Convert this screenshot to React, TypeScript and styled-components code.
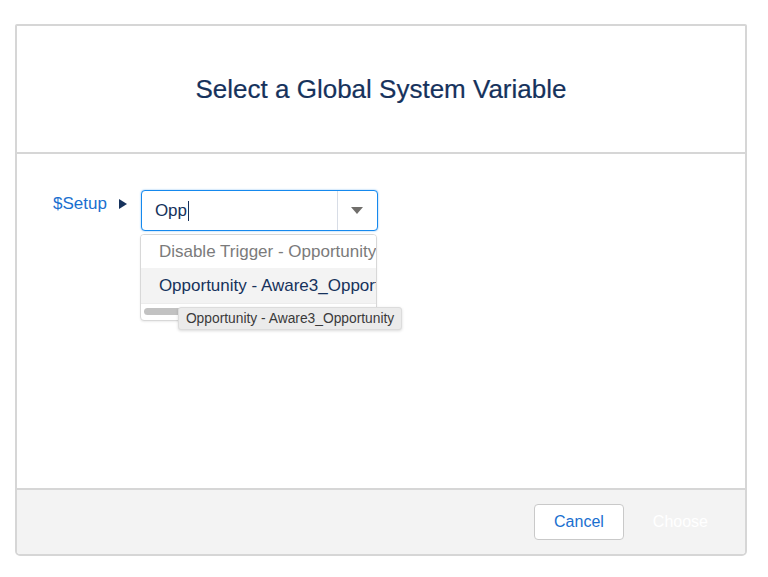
import React from "react";
import styled, { createGlobalStyle } from "styled-components";

const Global = createGlobalStyle`
  html, body { margin: 0; padding: 0; background: #ffffff; }
  body { font-family: "Liberation Sans", Arial, sans-serif; }
`;

const Page = styled.div`
  padding: 24px 0 0 15px;
`;

const Modal = styled.div`
  box-sizing: border-box;
  width: 732px;
  height: 532px;
  border: 2px solid #d6d6d6;
  border-radius: 2px 2px 5px 5px;
  display: flex;
  flex-direction: column;
  overflow: hidden;
  background: #fff;
`;

const Header = styled.div`
  height: 126px;
  border-bottom: 2px solid #d6d6d6;
  display: flex;
  align-items: center;
  justify-content: center;
`;

const Title = styled.h2`
  margin: 0;
  font-weight: 400;
  font-size: 26px;
  color: #16325c;
  -webkit-text-stroke: 0.2px #16325c;
`;

const Body = styled.div`
  flex: 1;
  padding: 36px 0 0 36px;
  display: flex;
  align-items: flex-start;
`;

const Label = styled.span`
  font-size: 17px;
  color: #1a6fcf;
  margin-top: 4px;
  line-height: 20px;
`;

const Arrow = styled.span`
  width: 0;
  height: 0;
  border-top: 5px solid transparent;
  border-bottom: 5px solid transparent;
  border-left: 8px solid #16325c;
  margin: 9px 14px 0 12px;
`;

const Combo = styled.div`
  position: relative;
`;

const InputBox = styled.div`
  box-sizing: border-box;
  width: 237px;
  height: 41px;
  border: 1px solid #1589ee;
  border-radius: 4px;
  box-shadow: 0 0 2px #7ab8f0;
  display: flex;
  align-items: stretch;
  background: #fff;
`;

const InputText = styled.div`
  flex: 1;
  display: flex;
  align-items: center;
  padding-left: 13px;
  font-size: 17px;
  color: #16325c;
`;

const Cursor = styled.span`
  display: inline-block;
  width: 1px;
  height: 20px;
  background: #16325c;
  margin-left: 1px;
`;

const CaretBtn = styled.div`
  width: 39px;
  border-left: 1px solid #d8dde6;
  display: flex;
  align-items: center;
  justify-content: center;
`;

const Caret = styled.span`
  width: 0;
  height: 0;
  border-left: 6px solid transparent;
  border-right: 6px solid transparent;
  border-top: 7px solid #706e6b;
`;

const Dropdown = styled.div`
  position: absolute;
  left: -1px;
  top: 44px;
  box-sizing: border-box;
  width: 237px;
  border: 1px solid #d8d8d8;
  border-radius: 4px;
  background: #fff;
  overflow: hidden;
  box-shadow: 0 1px 2px rgba(0, 0, 0, 0.08);
`;

const Option = styled.div<{ $active?: boolean; $muted?: boolean }>`
  height: ${(p) => (p.$active ? 35 : 33)}px;
  display: flex;
  align-items: center;
  padding-left: 18px;
  white-space: nowrap;
  overflow: hidden;
  font-size: 17px;
  background: ${(p) => (p.$active ? "#f3f3f3" : "#fff")};
  color: ${(p) => (p.$muted ? "#7b7b7b" : "#16325c")};
`;

const ScrollTrack = styled.div`
  height: 17px;
  border-top: 1px solid #ececec;
  padding: 4px 0 0 3px;
  box-sizing: border-box;
`;

const Thumb = styled.div`
  width: 120px;
  height: 7px;
  border-radius: 4px;
  background: #c2c2c2;
`;

const Tooltip = styled.div`
  position: absolute;
  left: 37px;
  top: 117px;
  height: 21px;
  padding: 0 7px;
  display: flex;
  align-items: center;
  background: #ebebeb;
  border: 1px solid #dcdcdc;
  border-radius: 3px;
  box-shadow: 0 1px 3px rgba(0, 0, 0, 0.15);
  font-size: 13.8px;
  color: #3a3a3a;
  white-space: nowrap;
`;

const Footer = styled.div`
  height: 64px;
  border-top: 2px solid #d6d6d6;
  background: #f3f3f3;
  display: flex;
  align-items: center;
  justify-content: flex-end;
  padding-right: 21px;
  gap: 13px;
`;

const Button = styled.button<{ $ghost?: boolean }>`
  height: 36px;
  padding: 0 ${(p) => (p.$ghost ? 15 : 19)}px;
  border-radius: 4px;
  font-family: "Liberation Sans", Arial, sans-serif;
  font-size: 16px;
  border: 1px solid ${(p) => (p.$ghost ? "transparent" : "#c9c9c9")};
  background: ${(p) => (p.$ghost ? "transparent" : "#fff")};
  color: ${(p) => (p.$ghost ? "#ffffff" : "#1a6fcf")};
`;

export default function App() {
  return (
    <>
      <Global />
      <Page>
        <Modal>
          <Header>
            <Title>Select a Global System Variable</Title>
          </Header>
          <Body>
            <Label>$Setup</Label>
            <Arrow />
            <Combo>
              <InputBox>
                <InputText>
                  Opp
                  <Cursor />
                </InputText>
                <CaretBtn>
                  <Caret />
                </CaretBtn>
              </InputBox>
              <Dropdown>
                <Option $muted>Disable Trigger - Opportunity</Option>
                <Option $active>Opportunity - Aware3_Opportunity</Option>
                <ScrollTrack>
                  <Thumb />
                </ScrollTrack>
              </Dropdown>
              <Tooltip>Opportunity - Aware3_Opportunity</Tooltip>
            </Combo>
          </Body>
          <Footer>
            <Button>Cancel</Button>
            <Button $ghost>Choose</Button>
          </Footer>
        </Modal>
      </Page>
    </>
  );
}
